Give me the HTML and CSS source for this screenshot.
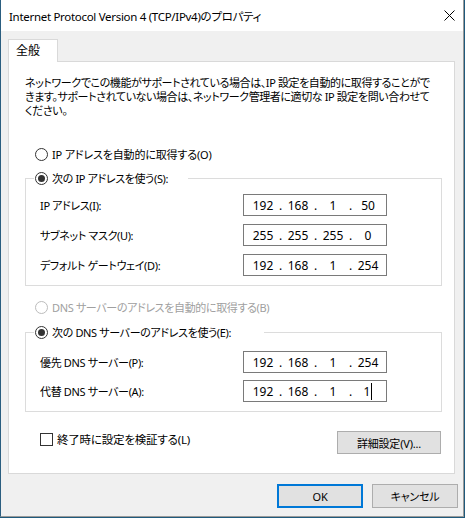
FILE: index.html
```html
<!DOCTYPE html>
<html lang="ja">
<head>
    <meta charset="UTF-8">
    <meta name="viewport" content="width=device-width, initial-scale=1.0">
    <title>Internet Protocol Version 4 (TCP/IPv4)のプロパティ</title>
    <link rel="stylesheet" href="styles.css">
</head>
<body>

    <div class="window">
        <div class="titlebar">
            <span class="title">Internet Protocol Version 4 (TCP/IPv4)のプロパティ</span>
            <svg class="close" width="11" height="11" viewBox="0 0 11 11">
                <path d="M0.5 0.5 L10.5 10.5 M10.5 0.5 L0.5 10.5" stroke="#000" stroke-width="1" fill="none"/>
            </svg>
        </div>

        <div class="content">
            <div class="tabs">
                <div class="tab">全般</div>
            </div>

            <div class="panel">
                <p class="intro">ネットワークでこの機能がサポートされている場合は、IP 設定を自動的に取得することがで<br>きます。サポートされていない場合は、ネットワーク管理者に適切な IP 設定を問い合わせて<br>ください。</p>

                <div class="option">
                    <span class="radio"></span>IP アドレスを自動的に取得する(O)
                </div>

                <fieldset class="group group-ip">
                    <legend><span class="radio checked"></span>次の IP アドレスを使う(S):</legend>
                    <div class="row">
                        <span class="row-label">IP アドレス(I):</span>
                        <div class="ip"><span class="oct">192</span><span class="dot">.</span><span class="oct">168</span><span class="dot">.</span><span class="oct">1</span><span class="dot">.</span><span class="oct">50</span></div>
                    </div>
                    <div class="row">
                        <span class="row-label">サブネット マスク(U):</span>
                        <div class="ip"><span class="oct">255</span><span class="dot">.</span><span class="oct">255</span><span class="dot">.</span><span class="oct">255</span><span class="dot">.</span><span class="oct">0</span></div>
                    </div>
                    <div class="row">
                        <span class="row-label">デフォルト ゲートウェイ(D):</span>
                        <div class="ip"><span class="oct">192</span><span class="dot">.</span><span class="oct">168</span><span class="dot">.</span><span class="oct">1</span><span class="dot">.</span><span class="oct">254</span></div>
                    </div>
                </fieldset>

                <div class="option disabled">
                    <span class="radio"></span>DNS サーバーのアドレスを自動的に取得する(B)
                </div>

                <fieldset class="group group-dns">
                    <legend><span class="radio checked"></span>次の DNS サーバーのアドレスを使う(E):</legend>
                    <div class="row">
                        <span class="row-label">優先 DNS サーバー(P):</span>
                        <div class="ip"><span class="oct">192</span><span class="dot">.</span><span class="oct">168</span><span class="dot">.</span><span class="oct">1</span><span class="dot">.</span><span class="oct">254</span></div>
                    </div>
                    <div class="row">
                        <span class="row-label">代替 DNS サーバー(A):</span>
                        <div class="ip"><span class="oct">192</span><span class="dot">.</span><span class="oct">168</span><span class="dot">.</span><span class="oct">1</span><span class="dot">.</span><span class="oct"><span class="caret">1</span></span></div>
                    </div>
                </fieldset>

                <div class="panel-footer">
                    <div class="check-row">
                        <span class="checkbox"></span>終了時に設定を検証する(L)
                    </div>
                    <button class="btn btn-advanced">詳細設定(V)...</button>
                </div>
            </div>

            <div class="dialog-buttons">
                <button class="btn btn-default">OK</button>
                <button class="btn">キャンセル</button>
            </div>
        </div>
    </div>

</body>
</html>
```

FILE: styles.css
```css
body {
    margin: 0;
    background: #1f5a7c;
    font-family: "Noto Sans", "Noto Sans CJK JP", sans-serif;
    font-size: 11px;
    letter-spacing: -0.35px;
    font-feature-settings: "palt";
    color: #000;
}
.window {
    width: 464px;
    height: 517px;
    box-sizing: border-box;
    border-left: 1px solid #2b5e80;
    border-right: 1px solid #9a9a9a;
    border-bottom: 1px solid #9a9a9a;
    background: #f0f0f0;
    display: flex;
    flex-direction: column;
}
.titlebar {
    height: 31px;
    flex: none;
    background: #fff;
    display: flex;
    align-items: center;
    padding-left: 8px;
}
.title {
    white-space: nowrap;
    font-size: 11.5px;
    letter-spacing: -0.3px;
}
.close {
    margin-left: auto;
    margin-right: 8px;
}
.content {
    flex: 1;
    padding: 8px 5px 0 7px;
}
.tabs {
    display: flex;
}
.tab {
    position: relative;
    z-index: 1;
    width: 50px;
    height: 23px;
    margin-bottom: -1px;
    background: #fff;
    border: 1px solid #d9d9d9;
    border-bottom: none;
    padding-left: 7px;
    box-sizing: border-box;
    line-height: 22px;
    font-size: 12px;
    letter-spacing: 0;
}
.panel {
    width: 447px;
    height: 413px;
    box-sizing: border-box;
    background: #fff;
    border: 1px solid #d9d9d9;
}
.intro {
    margin: 14px 0 0 16px;
    line-height: 14px;
    white-space: nowrap;
    letter-spacing: -0.4px;
}
.option {
    display: flex;
    align-items: center;
    height: 16px;
    margin: 28px 0 0 26px;
    white-space: nowrap;
    letter-spacing: -0.15px;
}
.option.disabled {
    margin-top: 13px;
    color: #a0a0a0;
    letter-spacing: -0.35px;
}
.radio {
    width: 13px;
    height: 13px;
    box-sizing: border-box;
    border: 1px solid #333;
    border-radius: 50%;
    background: #fff;
    margin-right: 4px;
    display: flex;
    align-items: center;
    justify-content: center;
    flex: none;
}
.radio.checked::after {
    content: "";
    width: 7px;
    height: 7px;
    border-radius: 50%;
    background: #333;
}
.disabled .radio {
    border-color: #bcbcbc;
}
.group {
    width: 417px;
    box-sizing: border-box;
    margin: 8px 0 0 16px;
    border: 1px solid #dcdcdc;
    padding: 8px 0 9px 14px;
}
.group legend {
    display: flex;
    align-items: center;
    height: 16px;
    margin-left: -6px;
    padding: 0 20px 0 1px;
    white-space: nowrap;
}
.group-dns {
    margin-top: 9px;
    padding-top: 11px;
}
.group-dns legend {
    padding-right: 33px;
}
.row {
    display: flex;
    align-items: center;
    height: 22px;
    margin-bottom: 8px;
}
.group-dns .row {
    margin-bottom: 7px;
}
.row:last-child {
    margin-bottom: 0;
}
.row-label {
    width: 203px;
    white-space: nowrap;
}
.ip {
    width: 144px;
    height: 22px;
    box-sizing: border-box;
    border: 1px solid #7a7a7a;
    background: #fff;
    display: flex;
    align-items: center;
    padding-left: 6px;
    font-size: 12px;
    letter-spacing: 0;
}
.oct {
    width: 26px;
    text-align: center;
}
.dot {
    width: 9px;
    text-align: center;
}
.caret {
    border-right: 1px solid #000;
    padding-right: 1px;
}
.panel-footer {
    width: 417px;
    margin: 18px 0 0 16px;
    padding: 0 1px 0 15px;
    box-sizing: border-box;
    display: flex;
    justify-content: space-between;
    align-items: flex-start;
}
.check-row {
    display: flex;
    align-items: center;
    height: 16px;
    margin-top: 1px;
    white-space: nowrap;
    font-size: 11.5px;
    letter-spacing: -0.2px;
}
.checkbox {
    width: 13px;
    height: 13px;
    box-sizing: border-box;
    border: 1px solid #333;
    background: #fff;
    margin-right: 4px;
}
.btn {
    font: inherit;
    letter-spacing: -0.2px;
    color: #000;
    background: #e1e1e1;
    border: 1px solid #adadad;
    height: 24px;
    width: 86px;
    padding: 0;
    box-sizing: border-box;
}
.btn-advanced {
    width: 104px;
    height: 23px;
    margin-top: 1px;
}
.btn-default {
    border: 2px solid #0078d7;
}
.dialog-buttons {
    display: flex;
    justify-content: flex-end;
    gap: 9px;
    margin-top: 10px;
}
```
